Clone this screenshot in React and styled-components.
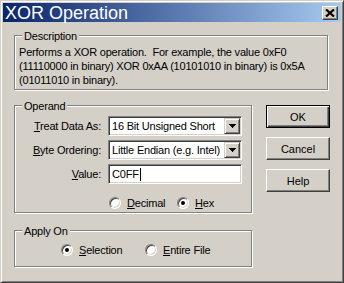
import React from "react";
import styled, { createGlobalStyle, css } from "styled-components";

const face = "#D4D0C8";

const GlobalStyle = createGlobalStyle`
  html, body {
    margin: 0;
    padding: 0;
    background: ${face};
  }
  body {
    font-family: "Liberation Sans", Arial, sans-serif;
    font-size: 11px;
    letter-spacing: -0.2px;
    color: #000;
  }
`;

const Window = styled.div`
  box-sizing: border-box;
  width: 344px;
  height: 283px;
  padding: 2px;
  background: ${face};
  border: 1px solid;
  border-color: ${face} #404040 #404040 ${face};
  box-shadow: inset 1px 1px #fff, inset -1px -1px #808080;
  display: flex;
  flex-direction: column;
`;

const TitleBar = styled.div`
  height: 19px;
  display: flex;
  align-items: center;
  justify-content: space-between;
  padding: 0 3px 0 2px;
  background: linear-gradient(to right, #0a246a, #a6caf0);
`;

const TitleText = styled.span`
  color: #fff;
  font-size: 18px;
  line-height: 21px;
  padding-top: 2px;
  letter-spacing: 0;
`;

const CloseButton = styled.div`
  box-sizing: border-box;
  width: 16px;
  height: 14px;
  background: ${face};
  border: 1px solid;
  border-color: #fff #404040 #404040 #fff;
  box-shadow: inset -1px -1px #808080;
  display: flex;
  align-items: center;
  justify-content: center;
`;

const Body = styled.div`
  display: flex;
  flex-direction: column;
  padding: 13px 0 0 11px;
`;

const GroupBox = styled.div`
  position: relative;
  box-sizing: border-box;
  width: ${({ $w }) => $w}px;
  height: ${({ $h }) => $h}px;
  margin-top: ${({ $mt }) => $mt || 0}px;
  border: 1px solid #808080;
  box-shadow: 1px 1px 0 #fff, inset 1px 1px 0 #fff;
`;

const Legend = styled.span`
  position: absolute;
  top: -6px;
  left: 7px;
  padding: 0 2px;
  line-height: 13px;
  background: ${face};
`;

const DescText = styled.p`
  margin: 0;
  padding: 9px 0 0 4px;
  line-height: 14px;
`;

const Lower = styled.div`
  display: flex;
  align-items: flex-start;
  margin-top: 15px;
`;

const LeftColumn = styled.div`
  display: flex;
  flex-direction: column;
`;

const OperandGrid = styled.div`
  display: grid;
  grid-template-columns: 86px 134px;
  column-gap: 7px;
  row-gap: 4px;
  align-items: center;
  padding-top: 10px;
`;

const Label = styled.label`
  text-align: right;
  line-height: 13px;
  white-space: nowrap;
`;

const Field = styled.div`
  box-sizing: border-box;
  height: 20px;
  background: #fff;
  border: 1px solid;
  border-color: #808080 #fff #fff #808080;
  box-shadow: inset 1px 1px #404040, inset -1px -1px ${face};
  display: flex;
  align-items: center;
  padding: 1px 1px 1px 3px;
  line-height: 13px;
  white-space: nowrap;
`;

const FieldText = styled.span`
  flex: 1;
`;

const Caret = styled.span`
  display: inline-block;
  width: 1px;
  height: 13px;
  margin-left: 1px;
  background: #000;
  vertical-align: middle;
`;

const DropButton = styled.span`
  box-sizing: border-box;
  width: 16px;
  height: 16px;
  background: ${face};
  border: 1px solid;
  border-color: ${face} #404040 #404040 ${face};
  box-shadow: inset 1px 1px #fff, inset -1px -1px #808080;
  display: flex;
  align-items: center;
  justify-content: center;
`;

const RadioRow = styled.div`
  display: flex;
  align-items: center;
  height: 12px;
  margin: ${({ $m }) => $m};
`;

const Option = styled.label`
  display: inline-flex;
  align-items: center;
  gap: 6px;
  width: ${({ $w }) => ($w ? `${$w}px` : "auto")};
  line-height: 13px;
  white-space: nowrap;
`;

const RadioCircle = styled.span`
  box-sizing: border-box;
  width: 12px;
  height: 12px;
  flex: none;
  border-radius: 50%;
  background: #fff;
  border: 1px solid;
  border-color: #808080 #fff #fff #808080;
  box-shadow: inset 1px 1px #404040, inset -1px -1px ${face};
  display: flex;
  align-items: center;
  justify-content: center;
  &::after {
    content: "";
    width: 4px;
    height: 4px;
    border-radius: 50%;
    background: #000;
    display: ${({ $checked }) => ($checked ? "block" : "none")};
  }
`;

const ButtonColumn = styled.div`
  display: flex;
  flex-direction: column;
  gap: 9px;
  margin-left: 14px;
`;

const Button = styled.button`
  box-sizing: border-box;
  width: 64px;
  height: 23px;
  padding: 0;
  font: inherit;
  color: #000;
  background: ${face};
  border: 1px solid;
  border-color: #fff #404040 #404040 #fff;
  box-shadow: inset -1px -1px #808080;
  ${({ $default }) =>
    $default &&
    css`
      border-color: #000;
      box-shadow: inset 1px 1px #fff, inset -1px -1px #404040,
        inset -2px -2px #808080;
    `}
`;

const CloseGlyph = () => (
  <svg width="10" height="8" viewBox="0 0 10 8">
    <path d="M1 0.5 L9 7.5 M9 0.5 L1 7.5" stroke="#000" strokeWidth="2.2" />
  </svg>
);

const DownArrow = () => (
  <svg width="7" height="4" viewBox="0 0 7 4" shapeRendering="crispEdges">
    <path d="M0 0h7v1H0zM1 1h5v1H1zM2 2h3v1H2zM3 3h1v1H3z" fill="#000" />
  </svg>
);

const Radio = ({ checked, w, children }) => (
  <Option $w={w}>
    <RadioCircle $checked={checked} />
    <span>{children}</span>
  </Option>
);

const Combo = ({ value }) => (
  <Field>
    <FieldText>{value}</FieldText>
    <DropButton>
      <DownArrow />
    </DropButton>
  </Field>
);

const App = () => {
  return (
    <>
      <GlobalStyle />
      <Window>
        <TitleBar>
          <TitleText>XOR Operation</TitleText>
          <CloseButton>
            <CloseGlyph />
          </CloseButton>
        </TitleBar>
        <Body>
          <GroupBox $w={314} $h={55}>
            <Legend>Description</Legend>
            <DescText>
              Performs a XOR operation.{"\u00a0 "}For example, the value 0xF0
              <br />
              (11110000 in binary) XOR 0xAA (10101010 in binary) is 0x5A
              <br />
              (01011010 in binary).
            </DescText>
          </GroupBox>
          <Lower>
            <LeftColumn>
              <GroupBox $w={238} $h={108}>
                <Legend>Operand</Legend>
                <OperandGrid>
                  <Label>
                    <u>T</u>reat Data As:
                  </Label>
                  <Combo value="16 Bit Unsigned Short" />
                  <Label>
                    <u>B</u>yte Ordering:
                  </Label>
                  <Combo value="Little Endian (e.g. Intel)" />
                  <Label>
                    <u>V</u>alue:
                  </Label>
                  <Field>
                    <span>C0FF</span>
                    <Caret />
                  </Field>
                  <span />
                  <RadioRow $m="9px 0 0 1px">
                    <Radio w={68}>
                      <u>D</u>ecimal
                    </Radio>
                    <Radio checked>
                      <u>H</u>ex
                    </Radio>
                  </RadioRow>
                </OperandGrid>
              </GroupBox>
              <GroupBox $w={238} $h={37} $mt={17}>
                <Legend>Apply On</Legend>
                <RadioRow $m="13px 0 0 46px">
                  <Radio checked w={84}>
                    <u>S</u>election
                  </Radio>
                  <Radio>
                    <u>E</u>ntire File
                  </Radio>
                </RadioRow>
              </GroupBox>
            </LeftColumn>
            <ButtonColumn>
              <Button $default>OK</Button>
              <Button>Cancel</Button>
              <Button>Help</Button>
            </ButtonColumn>
          </Lower>
        </Body>
      </Window>
    </>
  );
};

export default App;
